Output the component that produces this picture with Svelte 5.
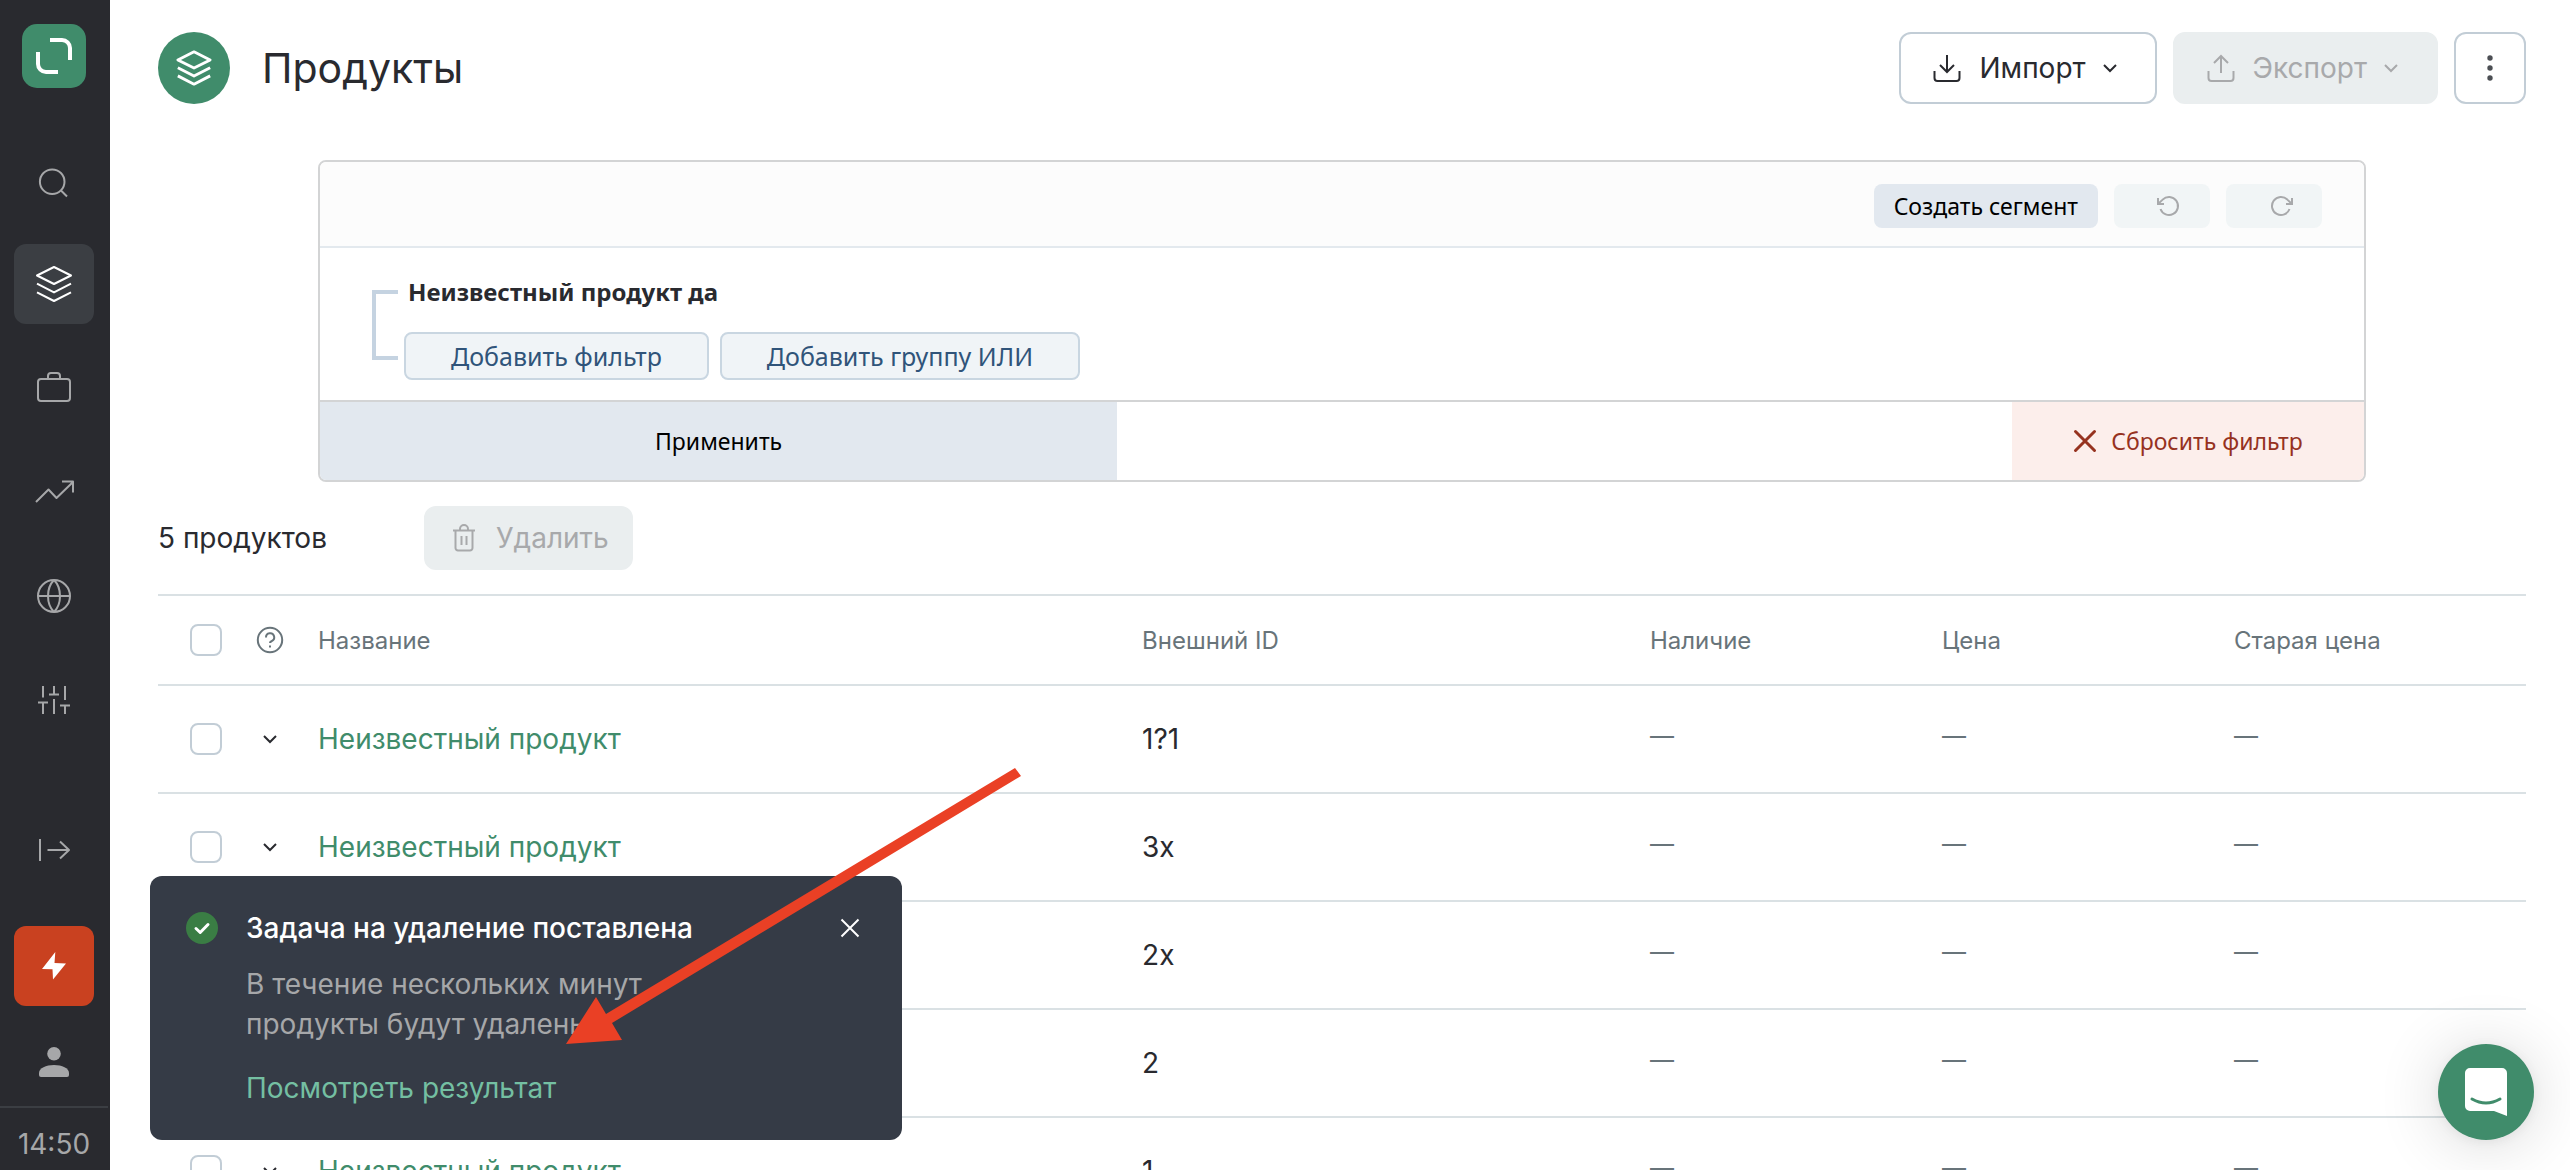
<script>
  const navItems = [
    {
      title: 'Продукты',
      active: true,
      path: 'M20 3L37 11.5L20 20L3 11.5ZM3 19.7L20 28.4L37 19.7M3 28.3L20 37L37 28.3',
    },
    {
      title: 'Бизнес',
      path: 'M7 11H33A3 3 0 0 1 36 14V30A3 3 0 0 1 33 33H7A3 3 0 0 1 4 30V14A3 3 0 0 1 7 11ZM14 11V8A3 3 0 0 1 17 5H23A3 3 0 0 1 26 8V11',
    },
    { title: 'Отчеты', path: 'M2 30L14.5 17.5L22.5 26L39 10M28 9.5H39V20.5' },
    {
      title: 'Сайт',
      path: 'M36 20A16 16 0 1 1 4 20A16 16 0 1 1 36 20ZM4 20H36M20 4C12 12 12 28 20 36C28 28 28 12 20 4Z',
    },
    {
      title: 'Настройки',
      path: 'M9 6V17.5M4 22.5H14M9 22.5V34M20 6V14.5M15 14.5H25M20 19V34M31 6V20M26 25.5H36M31 25.5V34',
    },
  ];
  const products = ['1?1', '3x', '2x', '2', '1'];

  let toastOpen = true;
  let selected = products.map(() => false);

  const toggleAll = (e) => {
    selected = products.map(() => e.target.checked);
  };
</script>

<div class="app">
  <aside class="sidebar">
    <a href="#home" class="logo" aria-label="Главная">
      <svg viewBox="0 0 64 64" width="64" height="64">
        <path d="M28 16H40A8 8 0 0 1 48 24V36M16 28V40A8 8 0 0 0 24 48H36" />
      </svg>
    </a>
    <button class="nav-item search" aria-label="Поиск">
      <svg class="icon" viewBox="0 0 40 40"><path d="M30.5 18.7A12.3 12.3 0 1 1 5.9 18.7A12.3 12.3 0 1 1 30.5 18.7ZM27 27.5L33 33.5" /></svg>
    </button>
    <nav>
      {#each navItems as item}
        <a href="#nav" class="nav-item" class:active={item.active} aria-label={item.title}>
          <svg class="icon" viewBox="0 0 40 40"><path d={item.path} /></svg>
        </a>
      {/each}
    </nav>
    <div class="sidebar-bottom">
      <button class="nav-item" aria-label="Развернуть меню">
        <svg class="icon" viewBox="0 0 40 40"><path d="M6 9V31M13.5 20H35M26 11.5L35 20L26 28.5" /></svg>
      </button>
      <button class="nav-item alert" aria-label="Уведомления">
        <svg class="icon solid" viewBox="0 0 40 40"><path d="M21.3 6L8 23L18.5 23.2L19 33.5L32 17.5L20.5 17Z" /></svg>
      </button>
      <button class="nav-item user" aria-label="Профиль">
        <svg class="icon solid" viewBox="0 0 40 40">
          <circle cx="20" cy="11.7" r="6.8" />
          <path d="M5 33V31C5 26 12 23 20 23S35 26 35 31V33Q35 35 33 35H7Q5 35 5 33Z" />
        </svg>
      </button>
      <div class="time">14:50</div>
    </div>
  </aside>

  <main>
    <header>
      <div class="page-icon">
        <svg class="icon" viewBox="0 0 40 40"><path d={navItems[0].path} /></svg>
      </div>
      <h1>Продукты</h1>
      <div class="actions">
        <button class="btn">
          <svg viewBox="0 0 32 32"><path d="M3.5 19V26A3 3 0 0 0 6.5 29H25.5A3 3 0 0 0 28.5 26V19M16 3V20M9 13L16 20L23 13" /></svg>
          Импорт
          <svg class="chevron" viewBox="0 0 32 32"><path d="M10 13L16 19L22 13" /></svg>
        </button>
        <button class="btn" disabled>
          <svg viewBox="0 0 32 32"><path d="M3.5 19V26A3 3 0 0 0 6.5 29H25.5A3 3 0 0 0 28.5 26V19M16 21V4M9 11L16 4L23 11" /></svg>
          Экспорт
          <svg class="chevron" viewBox="0 0 32 32"><path d="M10 13L16 19L22 13" /></svg>
        </button>
        <button class="btn more" aria-label="Еще">
          <svg class="dots" viewBox="0 0 32 32">
            <circle cx="16" cy="6" r="2.7" /><circle cx="16" cy="16" r="2.7" /><circle cx="16" cy="26" r="2.7" />
          </svg>
        </button>
      </div>
    </header>

    <section class="filter">
      <div class="filter-head">
        <button class="segment">Создать сегмент</button>
        <button class="history" disabled aria-label="Отменить">
          <svg viewBox="0 0 24 24"><path d="M1 4V10H7M3.51 15A9 9 0 1 0 5.64 5.64L1 10" /></svg>
        </button>
        <button class="history" disabled aria-label="Повторить">
          <svg viewBox="0 0 24 24"><path d="M23 4V10H17M20.49 15A9 9 0 1 1 18.36 5.64L23 10" /></svg>
        </button>
      </div>
      <div class="filter-body">
        <div class="bracket"></div>
        <div class="conditions">
          <strong>Неизвестный продукт да</strong>
          <div class="add-buttons">
            <button>Добавить фильтр</button>
            <button>Добавить группу ИЛИ</button>
          </div>
        </div>
      </div>
      <div class="filter-foot">
        <button class="apply">Применить</button>
        <button class="reset">
          <svg viewBox="0 0 24 24"><path d="M2.5 2.5L21.5 21.5M21.5 2.5L2.5 21.5" /></svg>
          Сбросить фильтр
        </button>
      </div>
    </section>

    <div class="toolbar">
      <span>5 продуктов</span>
      <button class="btn delete" disabled>
        <svg viewBox="0 0 32 32"><path d="M5 8.5H27M7.5 8.5V26A2.5 2.5 0 0 0 10 28.5H22A2.5 2.5 0 0 0 24.5 26V8.5M12 8V7A4 4 0 0 1 20 7V8M13.5 14V23M18.5 14V23" /></svg>
        Удалить
      </button>
    </div>

    <table>
      <colgroup>
        <col class="col-check" />
        <col class="col-toggle" />
        <col class="col-name" />
        <col />
        <col class="col-value" />
        <col class="col-value" />
        <col class="col-value" />
      </colgroup>
      <thead>
        <tr>
          <th class="check"><input type="checkbox" aria-label="Выбрать все" on:change={toggleAll} /></th>
          <th class="toggle">
            <svg class="help" viewBox="0 0 28 28" role="img" aria-label="Справка">
              <circle cx="14" cy="14" r="12.2" />
              <path d="M10 11.5A4.1 4.1 0 1 1 15.5 15.2Q14 15.8 14 17M14 19.5V21.5" />
            </svg>
          </th>
          <th>Название</th>
          <th>Внешний ID</th>
          <th>Наличие</th>
          <th>Цена</th>
          <th>Старая цена</th>
        </tr>
      </thead>
      <tbody>
        {#each products as id, i}
          <tr>
            <td class="check"><input type="checkbox" aria-label="Выбрать {id}" bind:checked={selected[i]} /></td>
            <td class="toggle">
              <button aria-label="Раскрыть">
                <svg viewBox="0 0 32 32"><path d="M10 13L16 19L22 13" /></svg>
              </button>
            </td>
            <td><a href="#product">Неизвестный продукт</a></td>
            <td>{id}</td>
            <td class="empty">—</td>
            <td class="empty">—</td>
            <td class="empty">—</td>
          </tr>
        {/each}
      </tbody>
    </table>
  </main>

  {#if toastOpen}
    <div class="toast" role="status">
      <svg class="toast-icon" viewBox="0 0 32 32">
        <circle cx="16" cy="16" r="16" />
        <path d="M10 16.5L14.2 20.5L22 12.5" />
      </svg>
      <div class="toast-text">
        <strong>Задача на удаление поставлена</strong>
        <p>В течение нескольких минут<br />продукты будут удалены</p>
        <a href="#result">Посмотреть результат</a>
      </div>
      <button
        class="close"
        aria-label="Закрыть"
        on:click={() => {
          toastOpen = false;
        }}
      >
        <svg viewBox="0 0 24 24"><path d="M3.5 3.5L20.5 20.5M20.5 3.5L3.5 20.5" /></svg>
      </button>
      <svg class="pointer" viewBox="0 0 460 280" width="460" height="280">
        <path d="M451 4L457 12L48 259L58 276L2 280L32 233L42 250Z" />
      </svg>
    </div>
  {/if}

  <button class="chat" aria-label="Чат">
    <svg viewBox="0 0 48 48" width="48" height="48">
      <path class="bubble" d="M8 0H40A5 5 0 0 1 45 5V48L32 43H8A5 5 0 0 1 3 38V5A5 5 0 0 1 8 0Z" />
      <path class="smile" d="M10 31Q24 39 38 31" />
    </svg>
  </button>
</div>

<style>
  :global(body) {
    margin: 0;
    background: #fff;
  }
  .app {
    display: flex;
    position: relative;
    height: 100vh;
    overflow: hidden;
    font-family: Inter, 'Liberation Sans', sans-serif;
    font-size: 28px;
    color: #292a2f;
  }
  button {
    font: inherit;
    cursor: pointer;
  }
  button:disabled {
    cursor: default;
  }
  a {
    color: #408c6b;
    text-decoration: none;
  }
  svg {
    display: block;
    fill: none;
    stroke: currentColor;
    stroke-width: 2;
    flex-shrink: 0;
  }

  .sidebar {
    display: flex;
    flex-direction: column;
    align-items: center;
    flex-shrink: 0;
    width: 108px;
    padding-top: 24px;
    background: #292a2f;
    border-right: 2px solid #292a2f;
  }
  .logo {
    border-radius: 15px;
    background: #408c6b;
    color: #fff;
  }
  .logo svg {
    stroke-width: 4;
  }
  .nav-item {
    display: flex;
    align-items: center;
    justify-content: center;
    width: 80px;
    height: 80px;
    padding: 0;
    border: 0;
    border-radius: 12px;
    background: none;
    color: #a6a7a9;
  }
  .nav-item.active {
    background: #3b3e43;
    color: #fff;
  }
  .icon {
    width: 40px;
    height: 40px;
    stroke-linejoin: round;
  }
  .icon.solid {
    fill: currentColor;
    stroke: none;
  }
  .search {
    margin-top: 55px;
  }
  nav {
    display: flex;
    flex-direction: column;
    gap: 24px;
    margin-top: 21px;
  }
  .sidebar-bottom {
    display: flex;
    flex-direction: column;
    align-items: center;
    align-self: stretch;
    margin-top: auto;
  }
  .nav-item.alert {
    margin: 36px 0 16px;
    background: #c94120;
    color: #fff;
  }
  .time {
    align-self: stretch;
    margin-top: 4px;
    padding: 18px 0 8px;
    border-top: 2px solid #3b3e43;
    line-height: 36px;
    text-align: center;
    color: #a6a7a9;
  }

  main {
    flex: 1;
    min-width: 0;
    height: 100vh;
    overflow: hidden;
    padding: 32px 44px 0 48px;
    box-sizing: border-box;
  }
  header {
    display: flex;
    align-items: center;
  }
  .page-icon {
    display: flex;
    align-items: center;
    justify-content: center;
    width: 72px;
    height: 72px;
    border-radius: 50%;
    background: #408c6b;
    color: #fff;
  }
  .page-icon svg {
    width: 38px;
    height: 38px;
    stroke-width: 3;
  }
  h1 {
    margin: 0 0 0 32px;
    font-size: 41px;
    font-weight: 400;
  }
  .actions {
    display: flex;
    gap: 16px;
    margin-left: auto;
  }
  .btn {
    display: flex;
    align-items: center;
    gap: 16px;
    height: 72px;
    padding: 0 29px 0 30px;
    border: 2px solid #c2cdd6;
    border-radius: 12px;
    background: #fff;
    color: #292a2f;
  }
  .btn svg {
    width: 32px;
    height: 32px;
  }
  .btn .chevron {
    margin-left: -8px;
  }
  .btn:disabled {
    border-color: #eaeeef;
    background: #eaeeef;
    color: #a8a9ab;
  }
  .btn.more {
    padding: 0 18px;
  }
  .btn .dots {
    fill: #4c4f54;
    stroke: none;
  }

  .filter {
    margin: 56px 160px 0;
    border: 2px solid #d3d4d5;
    border-radius: 8px;
    overflow: hidden;
    font-family: 'Noto Sans', sans-serif;
    font-size: 23px;
  }
  .filter-head {
    display: flex;
    align-items: center;
    justify-content: flex-end;
    gap: 16px;
    height: 80px;
    padding: 4px 42px 0 0;
    background: #fcfcfc;
    border-bottom: 2px solid #e3e9ee;
  }
  .filter-head button {
    height: 44px;
    padding: 0 20px;
    border: 0;
    border-radius: 8px;
  }
  .filter-head .segment {
    background: #e2e8ef;
    color: #000;
  }
  .filter-head .history {
    width: 96px;
    padding: 0 28px 0 43px;
    background: #f1f5f6;
    color: #a8a9ab;
  }
  .history svg {
    width: 24px;
    height: 24px;
  }
  .filter-body {
    display: flex;
    gap: 6px;
    height: 152px;
    padding: 0 52px;
    box-sizing: border-box;
  }
  .bracket {
    width: 26px;
    height: 70px;
    margin-top: 42px;
    border: 4px solid #c5d3e1;
    border-right: 0;
    box-sizing: border-box;
  }
  .conditions {
    padding-top: 26px;
  }
  .conditions strong {
    display: block;
    padding-left: 4px;
    font-size: 24px;
    line-height: 36px;
  }
  .add-buttons {
    display: flex;
    gap: 11px;
    margin-top: 22px;
  }
  .add-buttons button {
    height: 48px;
    padding: 0 45px;
    border: 2px solid #c9d6e1;
    border-radius: 8px;
    background: #f0f4f7;
    font-size: 25px;
    color: #30547a;
  }
  .filter-foot {
    display: flex;
    justify-content: space-between;
    height: 78px;
    border-top: 2px solid #d3d4d5;
  }
  .filter-foot button {
    border: 0;
  }
  .apply {
    width: 39%;
    background: #e2e8ef;
    color: #000;
  }
  .reset {
    display: flex;
    align-items: center;
    justify-content: center;
    gap: 14px;
    width: 352px;
    background: #fceeeb;
    color: #96321f;
  }
  .reset svg {
    width: 24px;
    height: 24px;
    stroke-width: 3;
    stroke-linecap: round;
  }

  .toolbar {
    display: flex;
    align-items: center;
    gap: 97px;
    margin: 24px 0;
  }
  .btn.delete {
    height: 64px;
    padding: 0 22px;
  }

  table {
    width: 100%;
    table-layout: fixed;
    border-collapse: collapse;
    border-top: 2px solid #dae1e4;
  }
  .col-check {
    width: 96px;
  }
  .col-toggle {
    width: 64px;
  }
  .col-name {
    width: 34.8%;
  }
  .col-value {
    width: 292px;
  }
  tr {
    border-bottom: 2px solid #dae1e4;
  }
  th,
  td {
    padding: 0;
    text-align: left;
  }
  th {
    height: 88px;
    font-size: 24px;
    font-weight: 400;
    color: #68747a;
  }
  td {
    height: 106px;
  }
  td.empty {
    height: 98px;
    padding-bottom: 8px;
    font-size: 24px;
    color: #68747a;
  }
  .check input {
    display: block;
    appearance: none;
    width: 32px;
    height: 32px;
    margin: 0 0 0 32px;
    border: 2px solid #c2cdd6;
    border-radius: 8px;
    background: #fff;
  }
  .check input:checked {
    border-color: #408c6b;
    background: #408c6b;
  }
  .toggle button {
    display: block;
    padding: 0;
    border: 0;
    background: none;
    color: #292a2f;
  }
  .toggle svg {
    width: 32px;
    height: 32px;
  }
  .toggle .help {
    width: 28px;
    height: 28px;
    margin-left: 2px;
  }

  .toast {
    display: flex;
    align-items: flex-start;
    position: absolute;
    left: 150px;
    bottom: 30px;
    width: 752px;
    height: 264px;
    padding: 36px 40px 0 36px;
    box-sizing: border-box;
    border-radius: 12px;
    background: #353b46;
    line-height: 40px;
  }
  .toast-icon {
    width: 32px;
    height: 32px;
    color: #fff;
  }
  .toast-icon circle {
    fill: #3a7d44;
    stroke: none;
  }
  .toast-icon path {
    stroke-width: 3;
    stroke-linecap: round;
    stroke-linejoin: round;
  }
  .toast-text {
    margin: -4px 0 0 28px;
  }
  .toast strong {
    font-weight: 500;
    color: #fff;
  }
  .toast p {
    margin: 16px 0 24px;
    color: #a6a7a9;
  }
  .toast a {
    color: #74bfa2;
  }
  .close {
    margin: 4px 0 0 auto;
    padding: 0;
    border: 0;
    background: none;
    color: #fff;
  }
  .close svg {
    width: 24px;
    height: 24px;
  }
  .pointer {
    position: absolute;
    left: 414px;
    top: -112px;
    fill: #ea4025;
    stroke: none;
    pointer-events: none;
  }

  .chat {
    display: flex;
    align-items: center;
    justify-content: center;
    position: absolute;
    right: 36px;
    bottom: 30px;
    width: 96px;
    height: 96px;
    padding: 0;
    border: 0;
    border-radius: 50%;
    background: #408c6b;
    box-shadow: 0 2px 12px rgba(0, 0, 0, 0.06), 0 4px 64px rgba(0, 0, 0, 0.16);
  }
  .bubble {
    fill: #fff;
    stroke: none;
  }
  .smile {
    stroke: #408c6b;
    stroke-width: 3;
    stroke-linecap: round;
  }
</style>
